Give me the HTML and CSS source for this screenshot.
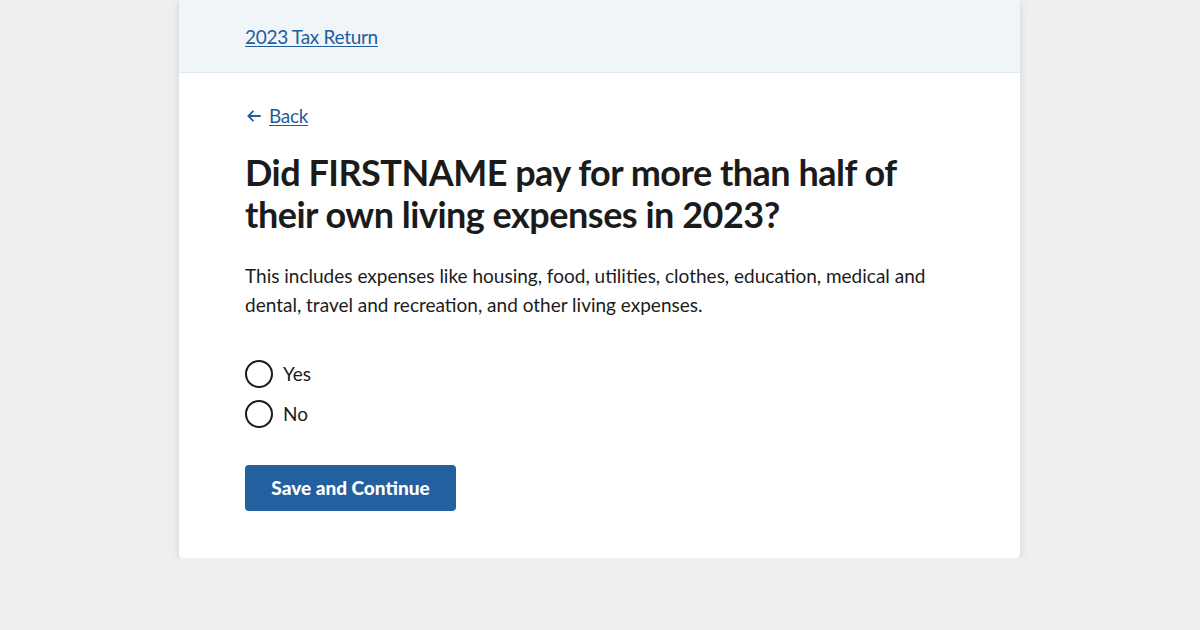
FILE: index.html
```html
<!DOCTYPE html>
<html lang="en">
<head>
  <meta charset="UTF-8" />
  <title>2023 Tax Return</title>
  <link rel="stylesheet" href="styles.css">
</head>
<body>
  <div class="card">
    <div class="card-header">
      <a href="#" class="header-link">2023 Tax Return</a>
    </div>
    <main class="card-body">
      <a href="#" class="back-link">
        <svg class="back-icon" viewBox="0 0 16 16" width="16" height="16" aria-hidden="true">
          <path d="M14 8H3M7.5 3.5L3 8l4.5 4.5" fill="none" stroke="currentColor" stroke-width="1.6"/>
        </svg>
        <span>Back</span>
      </a>
      <h1>Did FIRSTNAME pay for more than half of their own living expenses in 2023?</h1>
      <p class="hint">This includes expenses like housing, food, utilities, clothes, education, medical and dental, travel and recreation, and other living expenses.</p>
      <form class="question">
        <label class="radio"><input type="radio" name="answer" value="yes"><span class="circle"></span>Yes</label>
        <label class="radio"><input type="radio" name="answer" value="no"><span class="circle"></span>No</label>
        <button type="submit" class="submit">Save and Continue</button>
      </form>
    </main>
  </div>
</body>
</html>
```

FILE: styles.css
```css
body {
  margin: 0;
  background: #efefef;
  font-family: Lato, "Open Sans", sans-serif;
  color: #1b1b1b;
}
.card {
  width: 841px;
  margin-left: 179px;
  background: #fff;
  border-radius: 0 0 4px 4px;
  box-shadow: 0 2px 8px rgba(0,0,0,0.12);
}
.card-header {
  background: #f0f5fa;
  border-bottom: 1px solid #dfe8f2;
  padding: 0 66px;
  height: 72px;
  display: flex;
  align-items: center;
}
.header-link, .back-link {
  color: #1f5d9e;
  font-size: 19px;
  letter-spacing: -0.3px;
  text-decoration: underline;
  text-underline-offset: 2px;
}
.card-body {
  padding: 31px 66px 47px;
}
.back-link {
  display: inline-flex;
  align-items: center;
  gap: 6px;
}
.back-icon {
  width: 18px;
  height: 18px;
}
h1 {
  font-size: 36px;
  line-height: 42px;
  font-weight: 700;
  letter-spacing: -0.5px;
  margin: 23px 0 26px;
  max-width: 680px;
}
.hint {
  font-size: 19px;
  line-height: 29px;
  margin: 0 0 41px;
}
.question {
  display: flex;
  flex-direction: column;
  align-items: flex-start;
}
.radio {
  display: flex;
  align-items: center;
  gap: 10px;
  font-size: 19px;
  height: 28px;
  margin-bottom: 12px;
}
.radio input {
  display: none;
}
.circle {
  width: 24px;
  height: 24px;
  border: 2px solid #1b1b1b;
  border-radius: 50%;
}
.submit {
  margin-top: 25px;
  background: #245fa0;
  color: #fff;
  border: none;
  border-radius: 4px;
  font-family: inherit;
  font-size: 19px;
  font-weight: 900;
  width: 211px;
  height: 46px;
  cursor: pointer;
}
```
